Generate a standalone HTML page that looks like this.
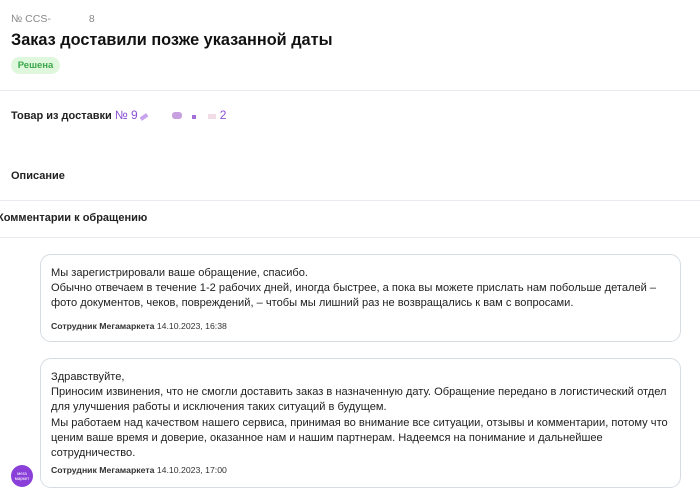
<!DOCTYPE html>
<html><head><meta charset="utf-8"><style>
body{margin:0;width:700px;height:502px;background:#fff;font-family:"Liberation Sans","DejaVu Sans",sans-serif;color:#222;position:relative;overflow:hidden}
.a{position:absolute;white-space:nowrap}
.hr{position:absolute;left:0;width:700px;height:1px;background:#e8ebef}
.box{position:absolute;left:40px;width:641px;border:1px solid #d7dce2;border-radius:11px;box-sizing:border-box}
.t{position:absolute;left:10px;font-size:11.1px;line-height:15.2px;color:#222;white-space:nowrap}
.s{position:absolute;left:10px;font-size:8.7px;color:#333}
.s b{font-weight:bold}
</style></head><body>
<div class="a" style="left:11px;top:13px;font-size:10.5px;color:#888">№ CCS-<span style="margin-left:38px">8</span></div>
<div class="a" style="left:11px;top:31px;font-size:16.3px;font-weight:bold;color:#111">Заказ доставили позже указанной даты</div>
<div class="a" style="left:11px;top:57px;width:49px;height:17px;border-radius:9px;background:#dff7dc;color:#3aa84a;font-size:9.5px;font-weight:bold;text-align:center;line-height:17px">Решена</div>
<div class="hr" style="top:90px"></div>
<div class="a" style="left:11px;top:108px;font-size:11px;font-weight:bold">Товар из доставки <span style="color:#8c4fd6;font-weight:normal;font-size:12px">№ 9<span style="display:inline-block;width:8px;height:4px;background:#c9a4ec;transform:rotate(-35deg);margin:0 24px 0 2px"></span><span style="display:inline-block;width:10px;height:7px;background:#c8a0e0;border-radius:3px;margin-right:10px"></span><span style="display:inline-block;width:4px;height:4px;background:#a46fd6;margin-right:12px"></span><span style="display:inline-block;width:8px;height:5px;background:#f2dce6;margin-right:4px"></span>2</span></div>
<div class="a" style="left:11px;top:170px;font-size:11px;font-weight:bold">Описание</div>
<div class="hr" style="top:200px"></div>
<div class="a" style="left:-3px;top:212px;font-size:11px;font-weight:bold">Комментарии к обращению</div>
<div class="hr" style="top:237px"></div>
<div class="box" style="top:254px;height:88px">
<div class="t" style="top:11px">Мы зарегистрировали ваше обращение, спасибо.<br>Обычно отвечаем в течение 1-2 рабочих дней, иногда быстрее, а пока вы можете прислать нам побольше деталей –<br>фото документов, чеков, повреждений, – чтобы мы лишний раз не возвращались к вам с вопросами.</div>
<div class="s" style="top:66px"><b>Сотрудник Мегамаркета</b> 14.10.2023, 16:38</div>
</div>
<div class="box" style="top:358px;height:130px">
<div class="t" style="top:11px">Здравствуйте,<br>Приносим извинения, что не смогли доставить заказ в назначенную дату. Обращение передано в логистический отдел<br>для улучшения работы и исключения таких ситуаций в будущем.<br>Мы работаем над качеством нашего сервиса, принимая во внимание все ситуации, отзывы и комментарии, потому что<br>ценим ваше время и доверие, оказанное нам и нашим партнерам. Надеемся на понимание и дальнейшее<br>сотрудничество.</div>
<div class="s" style="top:106px"><b>Сотрудник Мегамаркета</b> 14.10.2023, 17:00</div>
</div>
<div class="a" style="left:11px;top:465px;width:22px;height:22px;border-radius:50%;background:#8b3fd9;color:#fff;font-size:4.5px;line-height:5px;text-align:center;padding-top:6px;box-sizing:border-box">мега<br>маркет</div>
</body></html>
